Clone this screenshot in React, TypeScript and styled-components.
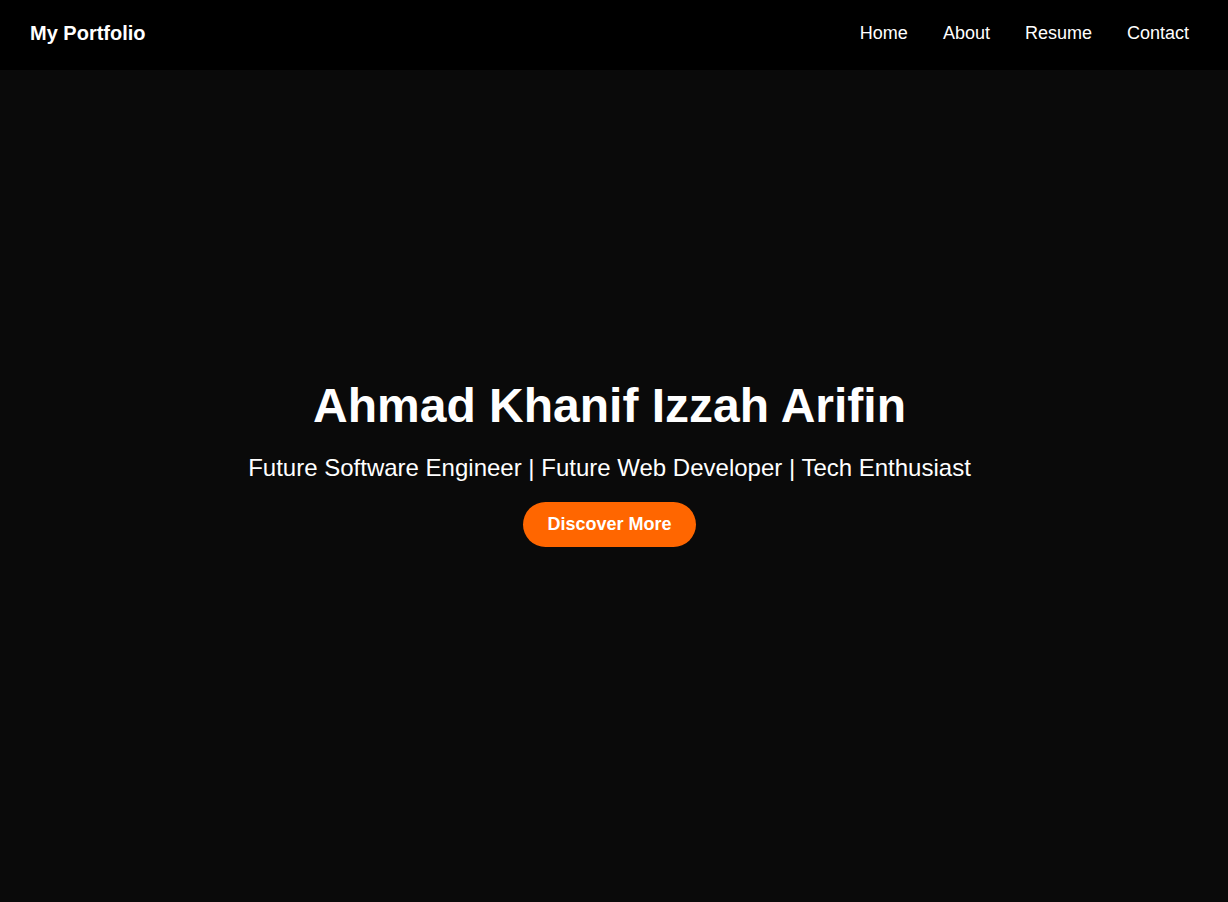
import React from 'react'
import styled, { createGlobalStyle } from 'styled-components'

const GlobalStyle = createGlobalStyle`
    html, body {
        margin: 0;
        padding: 0;
        background: #0a0a0a;
        font-family: "Liberation Sans", Arial, sans-serif;
        color: #fff;
    }
    * {
        box-sizing: border-box;
    }
`

const links = ['Home', 'About', 'Resume', 'Contact']

export default function App() {
    return (
    <>
        <GlobalStyle />
        <Navbar>
            <Logo>My Portfolio</Logo>
            <NavList>
                {links.map(link => (
                    <NavItem key={link}>
                        <NavLink href="#">{link}</NavLink>
                    </NavItem>
                ))}
            </NavList>
        </Navbar>
        <Hero>
            <Title>Ahmad Khanif Izzah Arifin</Title>
            <Subtitle>Future Software Engineer | Future Web Developer | Tech Enthusiast</Subtitle>
            <CtaButton>Discover More</CtaButton>
        </Hero>
    </>
    )
}

const Navbar = styled.header`
    display: flex;
    align-items: center;
    justify-content: space-between;
    height: 70px;
    padding: 0 39px 4px 30px;
    background: #000;
`

const Logo = styled.div`
    font-size: 20px;
    font-weight: bold;
    color: #fff;
`

const NavList = styled.ul`
    display: flex;
    gap: 35px;
    margin: 0;
    padding: 0;
    list-style: none;
`

const NavItem = styled.li`
    display: block;
`

const NavLink = styled.a`
    font-size: 18px;
    color: #fff;
    text-decoration: none;
`

const Hero = styled.section`
    display: flex;
    flex-direction: column;
    align-items: center;
    justify-content: center;
    min-height: calc(100vh - 70px);
    padding: 0 9px 50px 0;
    text-align: center;
    background: #0a0a0a;
`

const Title = styled.h1`
    margin: 3px 0 0;
    font-size: 48px;
    font-weight: bold;
    line-height: 55px;
    color: #fff;
`

const Subtitle = styled.p`
    margin: 21px 0 0;
    font-size: 24px;
    line-height: 28px;
    color: #fff;
`

const CtaButton = styled.button`
    margin-top: 20px;
    height: 45px;
    padding: 0 24px;
    border: none;
    border-radius: 25px;
    background: #ff6600;
    font-family: "Liberation Sans", Arial, sans-serif;
    font-size: 18px;
    font-weight: bold;
    color: #fff;
    cursor: pointer;
`
